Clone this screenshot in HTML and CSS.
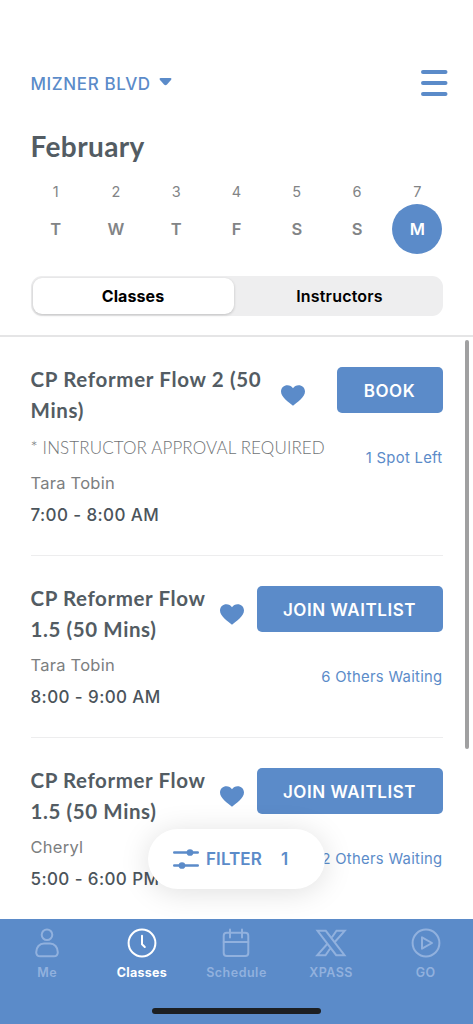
FILE: index.html
```html
<!DOCTYPE html>
<html lang="en">
<head>
<meta charset="utf-8">
<title>Classes</title>
<link rel="stylesheet" href="styles.css">
</head>
<body>
<div class="app">
  <header class="header">
    <div class="topbar">
      <div class="location"><span>MIZNER BLVD</span>
        <svg class="caret" width="13" height="8" viewBox="0 0 13 8"><path d="M1.500 0h10q1.500 .3.700 1.800L8 6.600q-1.500 1.200-3 0L.8 1.800Q0 .3 1.500 0z" fill="currentColor"/></svg>
      </div>
      <svg class="menu" width="28" height="28" viewBox="0 0 28 28" stroke="currentColor" stroke-width="4" stroke-linecap="round"><path d="M3 3h22.500M3 14h22.500M3 25h22.500"/></svg>
    </div>
    <h1 class="month">February</h1>
    <div class="week">
      <div class="day"><span class="num">1</span><span class="letter">T</span></div>
      <div class="day"><span class="num">2</span><span class="letter">W</span></div>
      <div class="day"><span class="num">3</span><span class="letter">T</span></div>
      <div class="day"><span class="num">4</span><span class="letter">F</span></div>
      <div class="day"><span class="num">5</span><span class="letter">S</span></div>
      <div class="day"><span class="num">6</span><span class="letter">S</span></div>
      <div class="day selected"><span class="num">7</span><span class="letter">M</span></div>
    </div>
    <div class="segments">
      <div class="segment active">Classes</div>
      <div class="segment">Instructors</div>
    </div>
  </header>

  <main class="list">
    <article class="item">
      <div class="info">
        <div class="title-row"><h2 class="title wide">CP Reformer Flow 2 (50<br>Mins)</h2>
          <svg class="heart" width="24" height="21" viewBox="0 0 24 21"><path d="M12 20.700C8.500 18 0 12.300 0 6.600 0 2.600 3 .2 6.400.2c2.400 0 4.400 1.200 5.600 3 1.200-1.800 3.200-3 5.600-3C21 .2 24 2.600 24 6.600c0 5.700-8.500 11.400-12 14.100z" fill="currentColor"/></svg></div>
        <div class="note">* INSTRUCTOR APPROVAL REQUIRED</div>
        <div class="teacher">Tara Tobin</div>
        <div class="time">7:00 - 8:00 AM</div>
      </div>
      <div class="actions"><button class="btn book">BOOK</button><div class="status">1 Spot Left</div></div>
    </article>
    <article class="item">
      <div class="info">
        <div class="title-row"><h2 class="title">CP Reformer Flow<br>1.5 (50 Mins)</h2>
          <svg class="heart" width="24" height="21" viewBox="0 0 24 21"><path d="M12 20.700C8.500 18 0 12.300 0 6.600 0 2.600 3 .2 6.400.2c2.400 0 4.400 1.200 5.600 3 1.200-1.800 3.200-3 5.600-3C21 .2 24 2.600 24 6.600c0 5.700-8.500 11.400-12 14.100z" fill="currentColor"/></svg></div>
        <div class="teacher">Tara Tobin</div>
        <div class="time">8:00 - 9:00 AM</div>
      </div>
      <div class="actions"><button class="btn">JOIN WAITLIST</button><div class="status">6 Others Waiting</div></div>
    </article>
    <article class="item">
      <div class="info">
        <div class="title-row"><h2 class="title">CP Reformer Flow<br>1.5 (50 Mins)</h2>
          <svg class="heart" width="24" height="21" viewBox="0 0 24 21"><path d="M12 20.700C8.500 18 0 12.300 0 6.600 0 2.600 3 .2 6.400.2c2.400 0 4.400 1.200 5.600 3 1.200-1.800 3.200-3 5.600-3C21 .2 24 2.600 24 6.600c0 5.700-8.500 11.400-12 14.100z" fill="currentColor"/></svg></div>
        <div class="teacher">Cheryl</div>
        <div class="time">5:00 - 6:00 PM</div>
      </div>
      <div class="actions"><button class="btn">JOIN WAITLIST</button><div class="status">2 Others Waiting</div></div>
    </article>
    <div class="scrollbar"></div>
    <div class="filter">
      <svg width="26" height="22" viewBox="0 0 26 22" fill="none" stroke="currentColor" stroke-width="2.400" stroke-linecap="round"><path d="M1.200 4.500h23.600M1.200 17.500h23.600"/><circle cx="17" cy="4.500" r="2.600" fill="currentColor" stroke-width="1.500"/><circle cx="9" cy="17.500" r="2.600" fill="currentColor" stroke-width="1.500"/></svg>
      <span class="filter-label">FILTER</span><span class="filter-count">1</span>
    </div>
  </main>

  <nav class="tabs">
    <div class="tab">
      <svg width="30" height="30" viewBox="0 0 30 30"><circle cx="15" cy="6.800" r="5.300"/><path d="M12 15.500h6c4.500 0 7.800 3.700 7.800 8.700 0 2.600-1.500 4.100-4 4.100H8.200c-2.500 0-4-1.500-4-4.100 0-5 3.300-8.700 7.800-8.700z"/></svg>
      <span>Me</span></div>
    <div class="tab active">
      <svg width="30" height="30" viewBox="0 0 30 30"><circle cx="15" cy="15" r="13.400"/><path d="M15 7.800v8.400l2.800 2.800"/></svg>
      <span>Classes</span></div>
    <div class="tab">
      <svg width="30" height="30" viewBox="0 0 30 30"><rect x="2.700" y="4.700" width="24.600" height="23.300" rx="3"/><path d="M2.700 14h24.600M9 1.500v8M21 1.500v8"/></svg>
      <span>Schedule</span></div>
    <div class="tab">
      <svg class="xpass" width="32" height="30" viewBox="0 0 32 30"><path d="M2.500 2.800h8.300L29.500 27.200h-8.300zM17 9.300l4.500-6.500h8.200L19.800 14M15 20.700l-4.500 6.500H2.300L12.200 16"/></svg>
      <span>XPASS</span></div>
    <div class="tab">
      <svg width="30" height="30" viewBox="0 0 30 30"><circle cx="15" cy="15" r="13.400"/><path d="M11 9.300v11.400l10-5.700z"/></svg>
      <span>GO</span></div>
    <div class="home-bar"></div>
  </nav>
</div>
</body>
</html>
```
FILE: styles.css
```css
* { box-sizing: border-box; }
body { margin: 0; background: #fff; font-family: Inter, "Liberation Sans", sans-serif; }
.app { width: 473px; height: 1024px; display: flex; flex-direction: column; overflow: hidden; }
h1, h2 { margin: 0; font-family: Lato, "Open Sans", sans-serif; font-weight: 700; color: #535c63; }

.header { height: 337px; flex: none; padding: 63px 30.500px 0; border-bottom: 2px solid #e5e5e6; }
.topbar { height: 40px; display: flex; justify-content: space-between; align-items: center; color: #5b8bc9; margin-right: -5.500px; }
.location { display: flex; align-items: center; gap: 8px; padding-top: 2px; font-size: 17px; font-weight: 500; letter-spacing: .6px; }
.caret { margin-top: -5px; }
.month { margin-top: 25px; height: 37px; line-height: 37px; font-size: 28px; letter-spacing: .4px; }
.week { display: grid; grid-template-columns: repeat(7, 1fr); margin: 17px -5px 0; }
.day { display: flex; flex-direction: column; align-items: center; color: #828486; }
.num { height: 22px; line-height: 20px; font-size: 14.500px; }
.letter { width: 50px; height: 50px; line-height: 51px; text-align: center; border-radius: 50%; font-size: 16.500px; font-weight: 600; }
.selected .letter { background: #5b8bc9; color: #fff; }
.segments { margin-top: 22px; height: 40px; padding: 2px; border-radius: 11px; background: #eeeeef; display: grid; grid-template-columns: 201px 1fr; }
.segment { display: flex; align-items: center; justify-content: center; padding-left: 5px; font-size: 16px; font-weight: 600; letter-spacing: .2px; color: #000; }
.segment.active { padding-left: 0; letter-spacing: .1px; background: #fff; border-radius: 9px; font-weight: 700; box-shadow: 0 1px 3px rgba(0,0,0,.2); }

.list { position: relative; height: 582px; flex: none; overflow: hidden; padding: 0 30.500px; }
.item { display: flex; justify-content: space-between; padding: 28px 0 25px; border-bottom: 1px solid #ededee; }
.info { width: 0; white-space: nowrap; }
.title-row { display: flex; margin-top: -1px; }
.title { width: 189px; flex: none; font-size: 20.500px; line-height: 30.500px; letter-spacing: .6px; }
.title.wide { width: 250px; letter-spacing: .67px; }
.heart { flex: none; margin-top: 20.500px; color: #5b8bc9; }
.note { margin-top: 8px; line-height: 29px; font-family: Lato, sans-serif; font-weight: 300; font-size: 17px; letter-spacing: .12px; color: #707376; }
.teacher { margin-top: 5px; line-height: 33px; font-size: 16.500px; color: #7c7e80; letter-spacing: .25px; }
.time { line-height: 30px; font-size: 17px; font-weight: 500; color: #4b545b; letter-spacing: .4px; }
.actions { display: flex; flex-direction: column; align-items: flex-end; padding-top: 2px; }
.btn { width: 186px; height: 46px; border: 0; border-radius: 5px; background: #5b8bc9; color: #fff; font: 600 17px Inter, sans-serif; letter-spacing: .55px; padding: 1px 0 0; }
.btn.book { width: 106px; }
.status { margin-top: 35px; line-height: 20px; font-size: 14.800px; color: #5b8bc9; letter-spacing: .3px; }
.scrollbar { position: absolute; left: 465px; top: 3px; width: 4px; height: 409px; border-radius: 2px; background: #a0a0a1; }
.filter { position: absolute; left: 148px; top: 492px; width: 177px; height: 60px; padding-left: 25px; border-radius: 30px; background: #fff; box-shadow: 0 3px 30px rgba(0,0,0,.13); display: flex; align-items: center; color: #5b8bc9; font-size: 17px; font-weight: 600; }
.filter-label { margin-left: 7px; width: 75px; letter-spacing: .1px; }

.tabs { position: relative; height: 105px; flex: none; background: #5b8bc9; display: grid; grid-template-columns: repeat(5, 1fr); padding-top: 9px; }
.tab { display: flex; flex-direction: column; align-items: center; color: #91b1de; font-size: 12.500px; font-weight: 600; letter-spacing: .5px; }
.tab svg { fill: none; stroke: currentColor; stroke-width: 2; stroke-linejoin: round; stroke-linecap: round; }
.tab .xpass { stroke-linejoin: miter; stroke-linecap: butt; }
.tab span { margin-top: 4px; line-height: 21px; }
.tab.active { color: #fff; font-weight: 700; letter-spacing: .3px; }
.home-bar { position: absolute; left: 152px; top: 89px; width: 169px; height: 6px; border-radius: 3px; background: #1c1f22; }
```
